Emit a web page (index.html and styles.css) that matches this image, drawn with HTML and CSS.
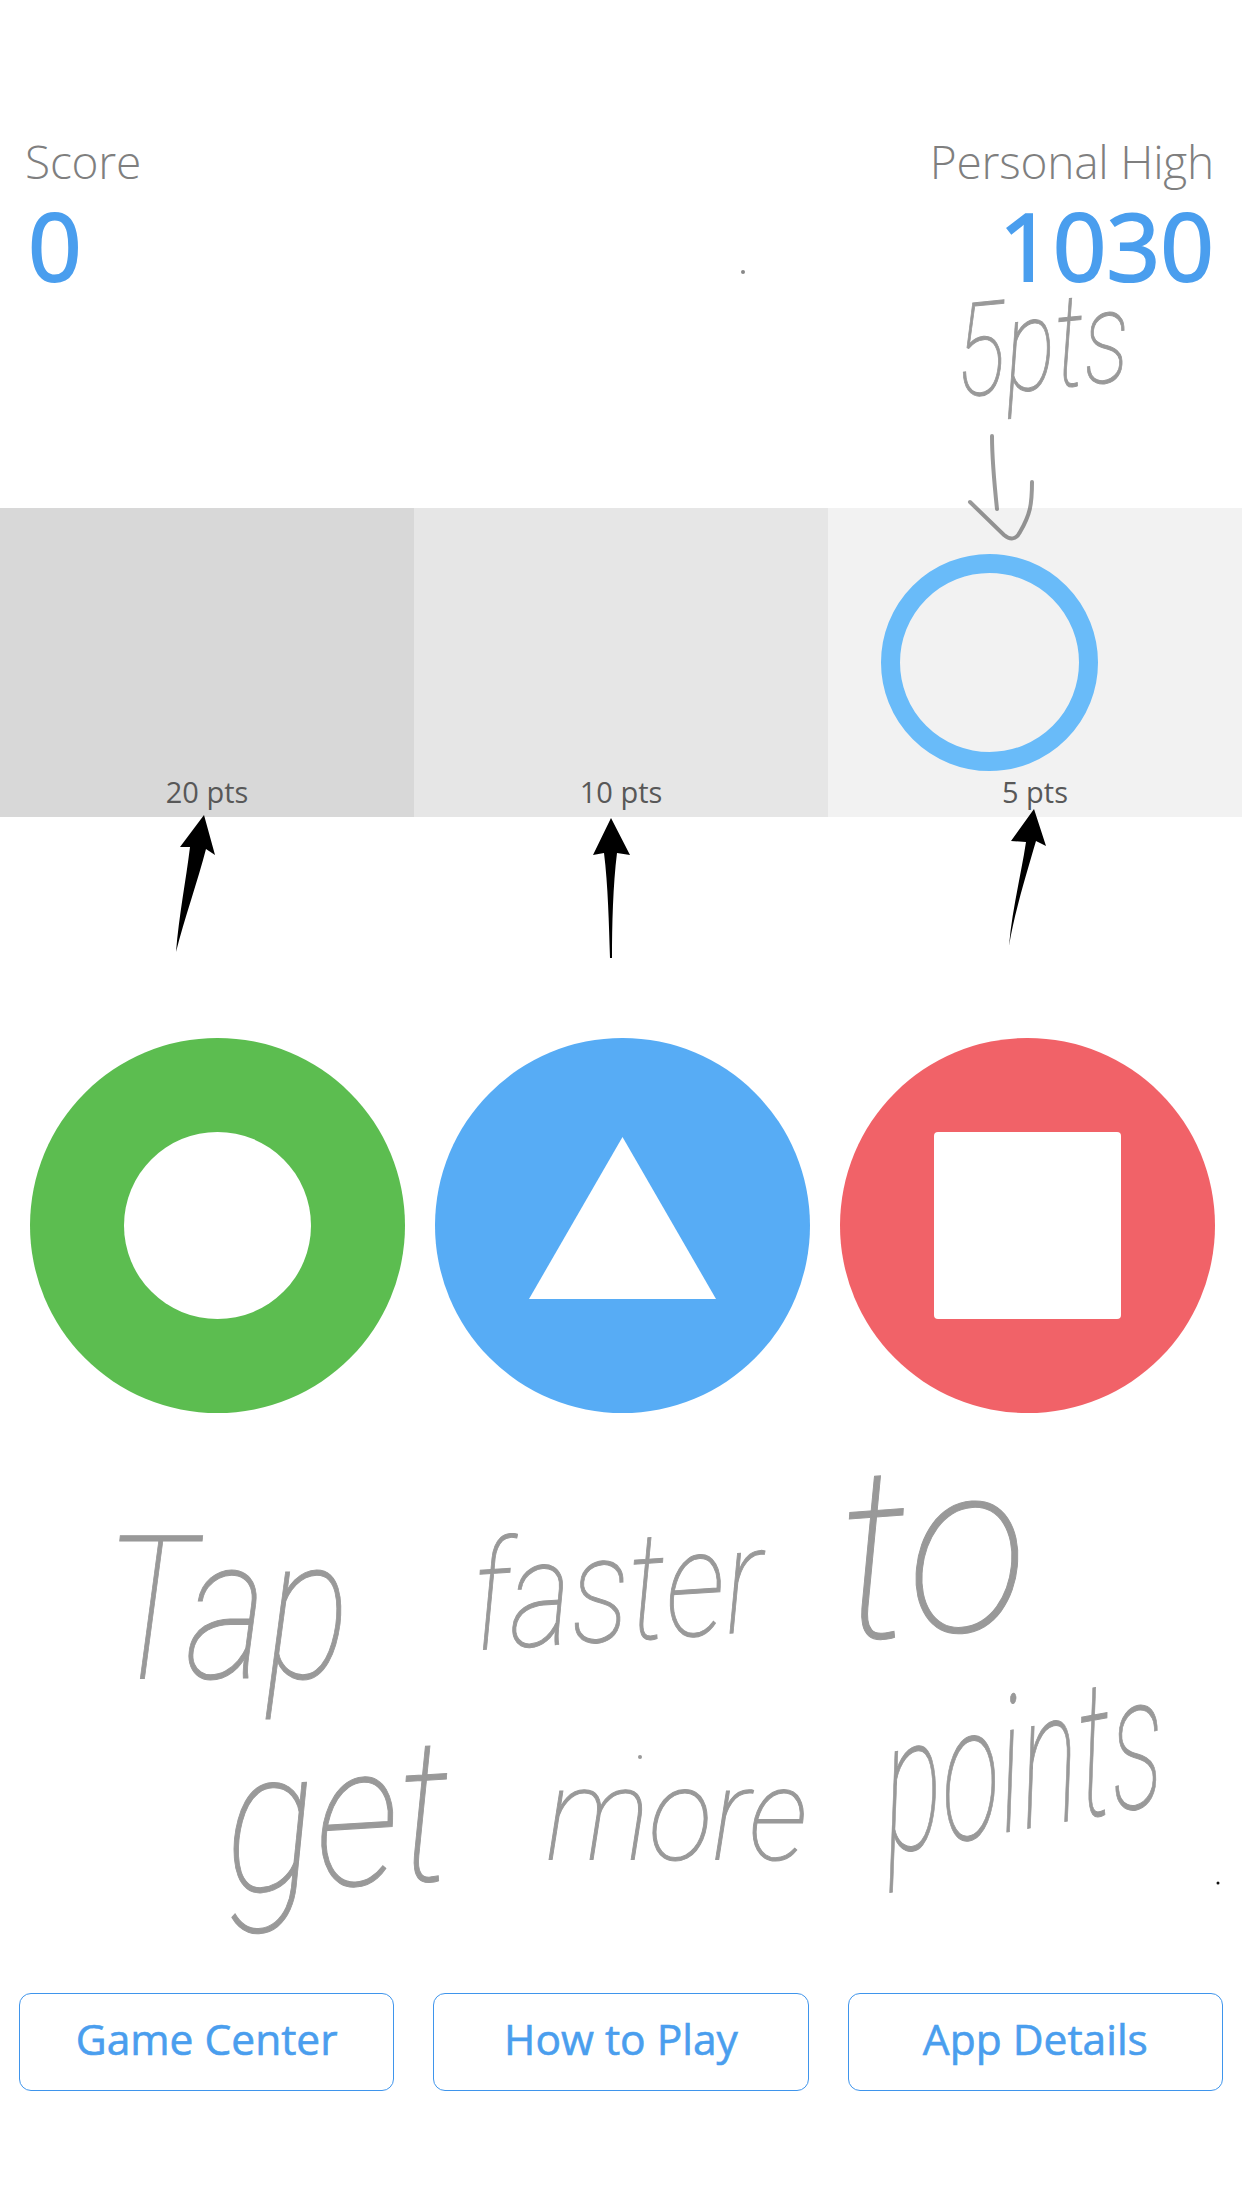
FILE: index.html
```html
<!DOCTYPE html>
<html lang="en">
<head>
    <meta charset="UTF-8">
    <meta name="viewport" content="width=device-width, initial-scale=1.0">
    <link rel="stylesheet" href="styles.css">
    <title>Tap Game</title>
</head>
<body>

<div class="page">
    <header class="scores">
        <div class="score">
            <div class="score-label">Score</div>
            <div class="score-value">0</div>
        </div>
        <div class="score score-right">
            <div class="score-label">Personal High</div>
            <div class="score-value">1030</div>
        </div>
    </header>

    <div class="bars">
        <div class="bar bar-dark"><span class="bar-label">20 pts</span></div>
        <div class="bar bar-mid"><span class="bar-label">10 pts</span></div>
        <div class="bar bar-light">
            <div class="ring"></div>
            <span class="bar-label">5 pts</span>
        </div>
    </div>

    <div class="pads">
        <div class="pad pad-green"><div class="hole"></div></div>
        <div class="pad pad-blue">
            <svg class="tri" width="187" height="187" viewBox="0 0 187 187"><polygon points="93.5,5 187,167 0,167" fill="#fff"/></svg>
        </div>
        <div class="pad pad-red"><div class="block"></div></div>
    </div>

    <nav class="buttons">
        <a class="btn">Game Center</a>
        <a class="btn">How to Play</a>
        <a class="btn">App Details</a>
    </nav>

    <!-- hand drawn notes on top of the screen -->
    <div class="ink">
        <svg class="ink-marks" width="1242" height="2208" viewBox="0 0 1242 2208">
            <path d="M204 815 L215 855 L206 849 C198 880 184 920 176 952 C179 915 186 880 190 847 L180 847 Z"/>
            <path d="M611 818 L630 855 L617 853 C613 885 612 925 612 958 L610 958 C609 925 608 885 604 853 L593 855 Z"/>
            <path d="M1034 809 L1046 846 L1036 841 C1026 875 1014 915 1009 946 C1012 910 1021 875 1026 842 L1011 841 Z"/>
            <g class="pencil">
                <path d="M992 436 C992 460 995 490 997 509"/>
                <path d="M970 502 L1004 535 C1010 540 1016 540 1020 532 C1030 515 1032 505 1032 482"/>
            </g>
            <circle cx="743" cy="272" r="2" fill="#888"/>
            <circle cx="640" cy="1757" r="2" fill="#999"/>
            <circle cx="1218" cy="1883" r="1.5" fill="#111"/>
        </svg>
        <span class="word w-5pts">5pts</span>
        <span class="word w-tap">Tap</span>
        <span class="word w-faster">faster</span>
        <span class="word w-to">to</span>
        <span class="word w-get">get</span>
        <span class="word w-more">more</span>
        <span class="word w-points">points</span>
    </div>
</div>

</body>
</html>
```

FILE: styles.css
```css
body {
    margin: 0;
    background-color: #fff;
    font-family: 'Open Sans', sans-serif;
}

.page {
    position: relative;
    width: 1242px;
    height: 2208px;
    overflow: hidden;
}

.scores {
    display: flex;
    justify-content: space-between;
    height: 508px;
    padding: 130px 28px 0 28px;
    box-sizing: border-box;
}

.score-right {
    text-align: right;
}

.score-label {
    margin-left: -3px;
    font-size: 46px;
    font-weight: 300;
    line-height: 63px;
    letter-spacing: -0.2px;
    color: #7f7f7f;
}

.score-value {
    font-size: 94px;
    line-height: 104px;
    -webkit-text-stroke: 2px #4a9eee;
    color: #4a9eee;
}

.bars {
    display: flex;
    height: 309px;
}

.bar {
    position: relative;
    flex: 1;
    display: flex;
    justify-content: center;
    align-items: flex-end;
}

.bar-dark {
    background-color: #d8d8d8;
}

.bar-mid {
    background-color: #e6e6e6;
}

.bar-light {
    background-color: #f2f2f2;
}

.bar-label {
    font-size: 29px;
    line-height: 37px;
    margin-bottom: 7px;
    color: #585858;
}

.ring {
    position: absolute;
    left: 53px;
    top: 46px;
    width: 217px;
    height: 217px;
    border: 19px solid #69bbf9;
    border-radius: 50%;
    box-sizing: border-box;
}

.pads {
    display: flex;
    gap: 30.5px;
    padding: 221px 0 0 30px;
}

.pad {
    width: 374.5px;
    height: 375px;
    border-radius: 50%;
    display: flex;
    justify-content: center;
    align-items: center;
}

.pad-green {
    background-color: #5cbd50;
}

.pad-blue {
    background-color: #57acf5;
}

.pad-red {
    background-color: #f16268;
}

.hole {
    width: 187px;
    height: 187px;
    border-radius: 50%;
    background-color: #fff;
}

.block {
    width: 187px;
    height: 187px;
    border-radius: 4px;
    background-color: #fff;
}

.buttons {
    display: flex;
    gap: 39px;
    padding: 580px 19px 0 19px;
}

.btn {
    flex: 1;
    height: 98px;
    box-sizing: border-box;
    border: 1px solid #3f95ec;
    border-radius: 12px;
    text-align: center;
    font-size: 42.5px;
    line-height: 89px;
    -webkit-text-stroke: 0.6px #4a9eee;
    color: #4a9eee;
}

/* notes layer */
.ink {
    position: absolute;
    left: 0;
    top: 0;
    width: 1242px;
    height: 2208px;
    pointer-events: none;
}

.ink-marks {
    position: absolute;
    left: 0;
    top: 0;
}

.pencil {
    fill: none;
    stroke: #000;
    stroke-opacity: 0.4;
    stroke-width: 4;
    stroke-linecap: round;
}

.word {
    position: absolute;
    font-family: 'Roboto', sans-serif;
    font-style: italic;
    font-weight: 100;
    line-height: 1;
    color: #999;
    -webkit-text-stroke: 1px #999;
    white-space: nowrap;
    transform-origin: 0 84%;
}

.w-5pts {
    left: 958px;
    top: 288px;
    font-size: 130px;
    transform: scaleX(0.72) rotate(-4deg);
}

.w-tap {
    left: 105px;
    top: 1510px;
    font-size: 200px;
    transform: scaleX(0.78);
}

.w-faster {
    left: 475px;
    top: 1524px;
    font-size: 150px;
    transform: scaleX(0.8) rotate(-3deg);
}

.w-to {
    left: 845px;
    top: 1438px;
    font-size: 240px;
    transform: scaleX(0.94) rotate(-4deg);
}

.w-get {
    left: 228px;
    top: 1725px;
    font-size: 200px;
    transform: scaleX(0.85) rotate(-3deg);
}

.w-more {
    left: 546px;
    top: 1751px;
    font-size: 130px;
    transform: scaleX(0.91);
}

.w-points {
    left: 888px;
    top: 1694px;
    font-size: 190px;
    transform: scaleX(0.57) rotate(-6deg);
}
```
